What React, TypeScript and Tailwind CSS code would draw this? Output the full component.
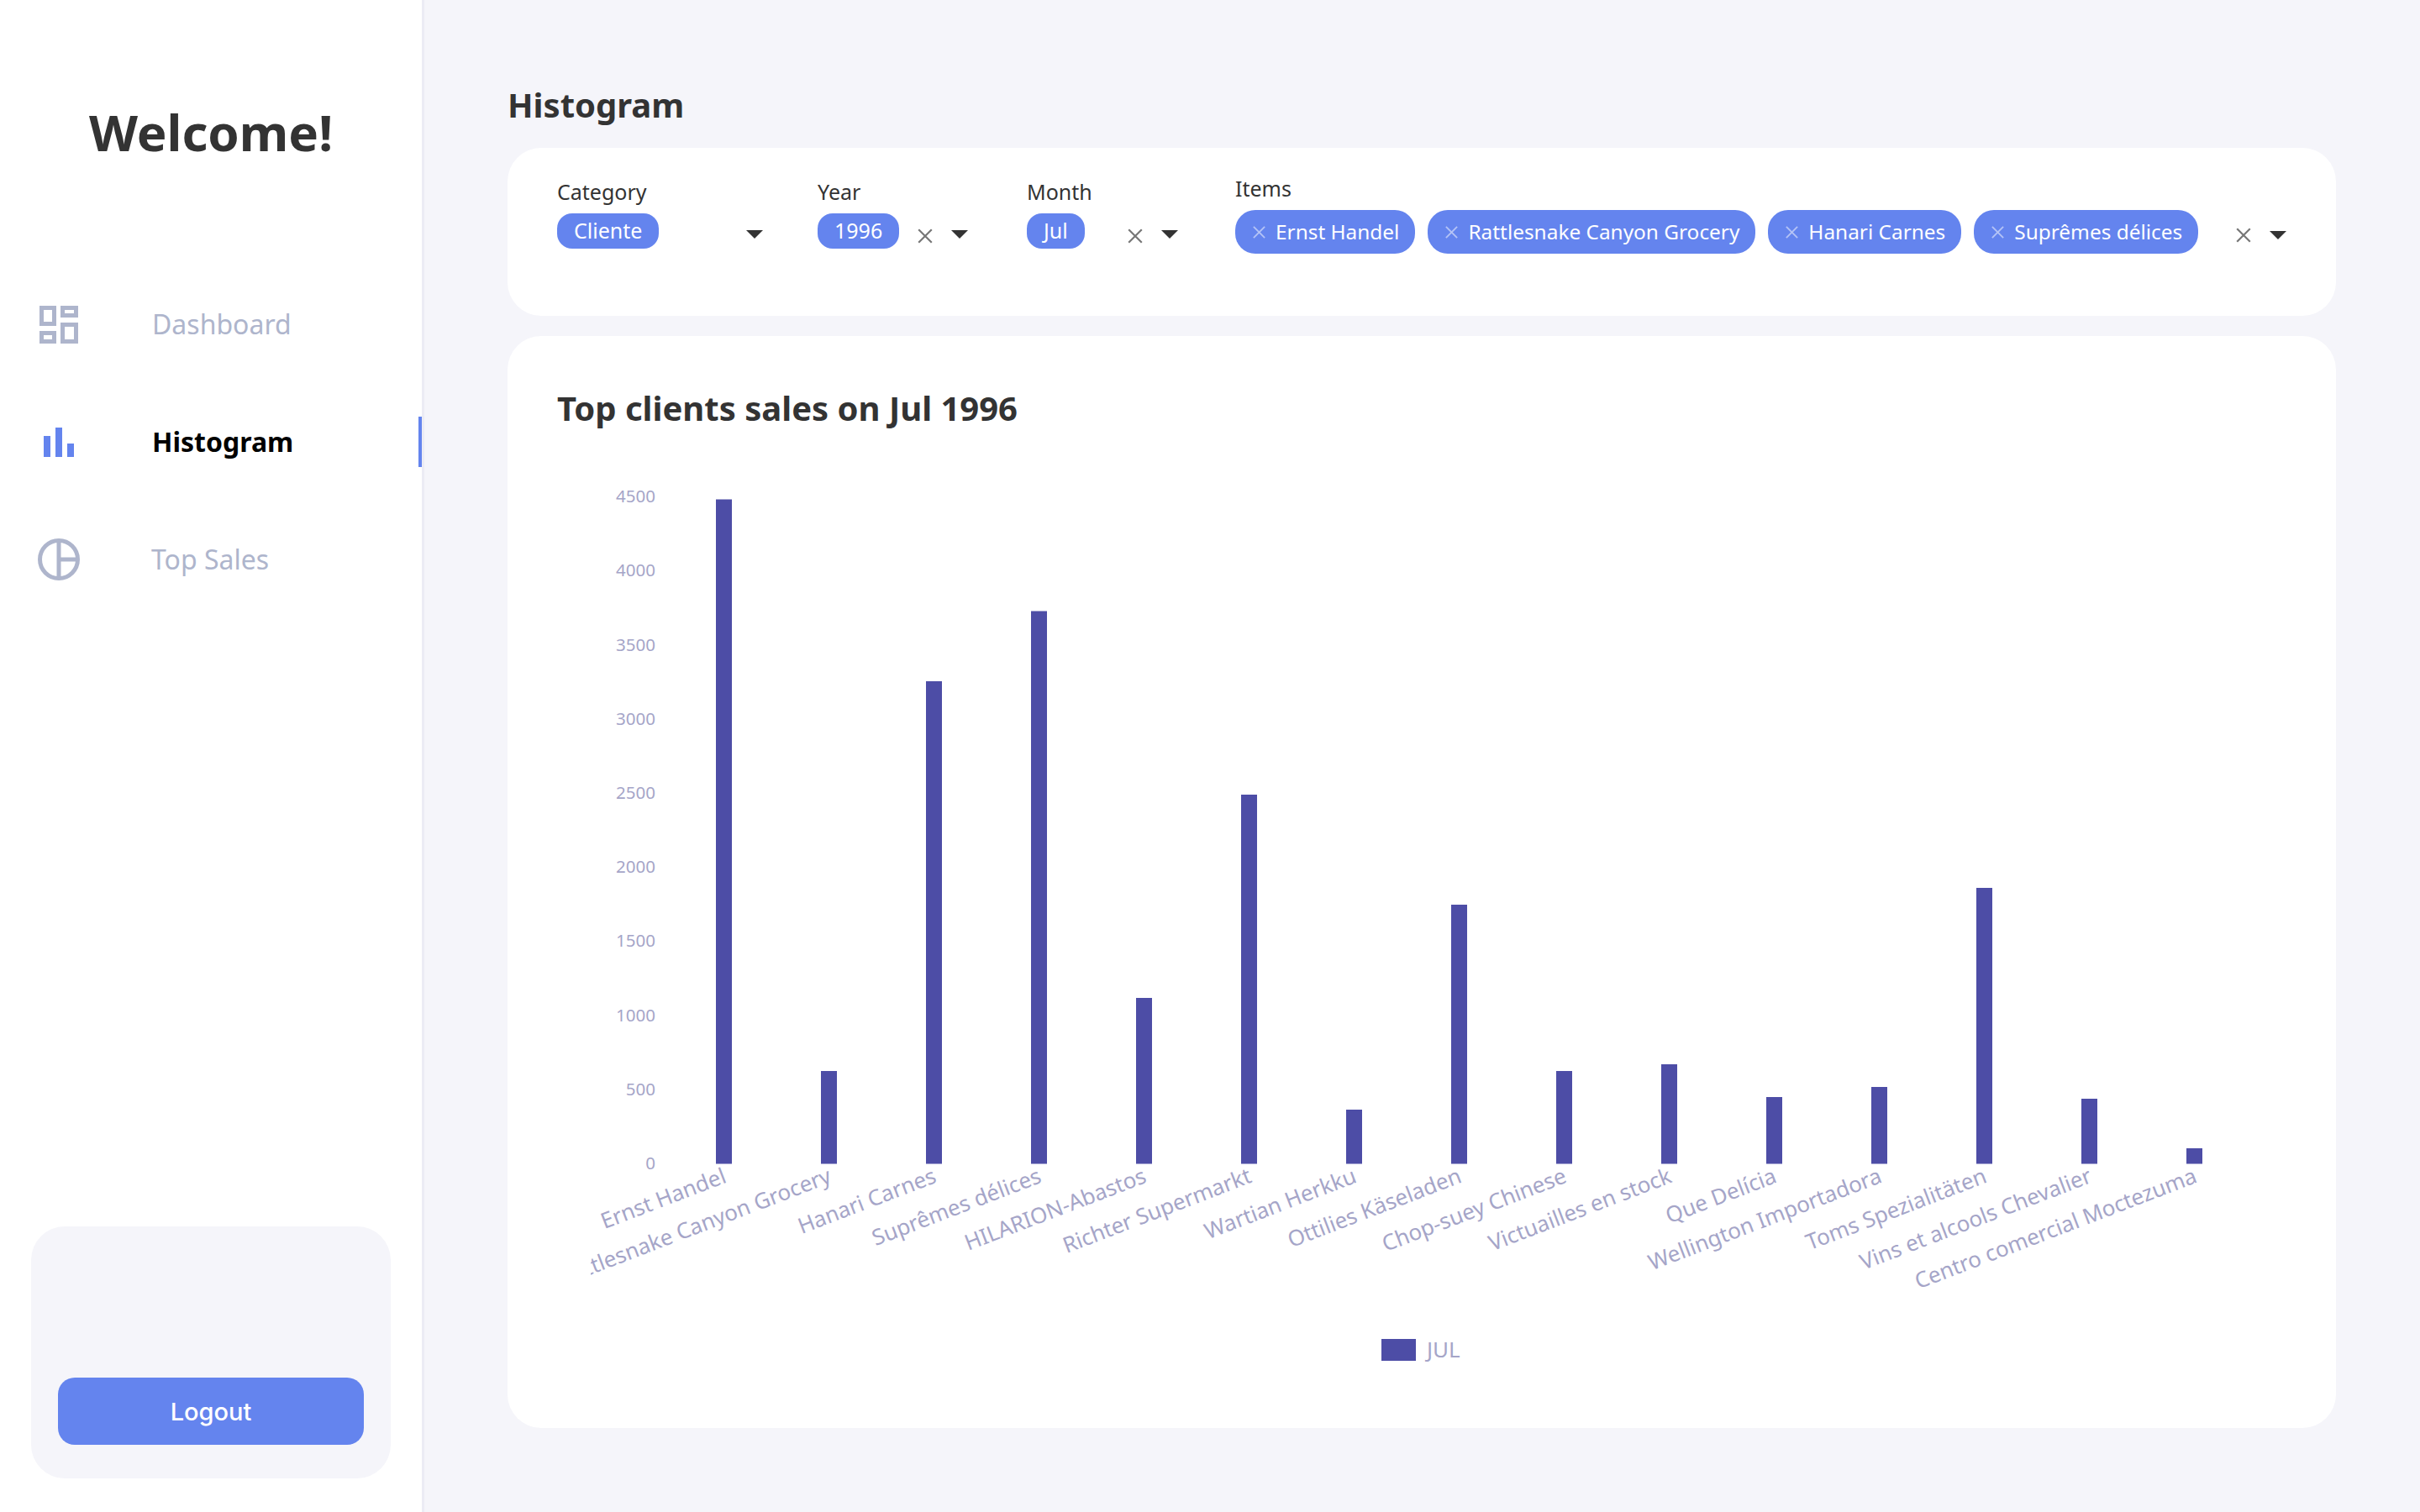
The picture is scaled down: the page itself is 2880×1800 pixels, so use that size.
const clients = [
  { name: 'Ernst Handel', top: 594.5 },
  { name: 'Rattlesnake Canyon Grocery', top: 1275 },
  { name: 'Hanari Carnes', top: 811 },
  { name: 'Suprêmes délices', top: 727.5 },
  { name: 'HILARION-Abastos', top: 1188 },
  { name: 'Richter Supermarkt', top: 946 },
  { name: 'Wartian Herkku', top: 1321 },
  { name: 'Ottilies Käseladen', top: 1077 },
  { name: 'Chop-suey Chinese', top: 1275 },
  { name: 'Victuailles en stock', top: 1267 },
  { name: 'Que Delícia', top: 1306 },
  { name: 'Wellington Importadora', top: 1294 },
  { name: 'Toms Spezialitäten', top: 1057 },
  { name: 'Vins et alcools Chevalier', top: 1308 },
  { name: 'Centro comercial Moctezuma', top: 1367 },
];

const ticks = [0, 500, 1000, 1500, 2000, 2500, 3000, 3500, 4000, 4500];

function Cross({ className }: { className: string }) {
  return (
    <svg viewBox="0 0 18 18" className={className} fill="none" stroke="currentColor" strokeWidth="2">
      <path d="M2 2L16 16M16 2L2 16" />
    </svg>
  );
}

function Arrow() {
  return (
    <svg viewBox="0 0 20 10" className="h-[10px] w-[20px] shrink-0 fill-[#333333]">
      <path d="M0 0H20L10 10Z" />
    </svg>
  );
}

function Chip({ label }: { label: string }) {
  return (
    <span className="flex h-[42px] items-center rounded-[18px] bg-[#6484ee] px-[20px] text-[25px] text-white">
      {label}
    </span>
  );
}

function ItemChip({ label }: { label: string }) {
  return (
    <span className="flex h-[52px] items-center rounded-[24px] bg-[#6484ee] pl-[20px] pr-[19px] text-[24.4px] text-white">
      <Cross className="mr-[11px] h-[17px] w-[17px] text-[#b4c3f6]" />
      {label}
    </span>
  );
}

function DashboardIcon() {
  return (
    <svg viewBox="0 0 46 45" className="h-[45px] w-[46px]" fill="none" stroke="#aeb5cc" strokeWidth="5">
      <rect x="2.5" y="2.5" width="15" height="19" />
      <rect x="27.5" y="2.5" width="16" height="9" />
      <rect x="2.5" y="32.5" width="15" height="10" />
      <rect x="27.5" y="22.5" width="16" height="20" />
    </svg>
  );
}

function BarsIcon() {
  return (
    <svg viewBox="0 0 36 35" className="h-[35px] w-[36px] fill-[#6484ee]">
      <rect x="0" y="10" width="8" height="25" />
      <rect x="14" y="0" width="8" height="35" />
      <rect x="28" y="19" width="8" height="16" />
    </svg>
  );
}

function PieIcon() {
  return (
    <svg viewBox="0 0 50 50" className="h-[50px] w-[50px]" fill="none" stroke="#aeb5cc" strokeWidth="5">
      <circle cx="25" cy="25" r="22.5" />
      <path d="M25 3V47M25 25H47" />
    </svg>
  );
}

function Chart() {
  return (
    <svg viewBox="604 540 2176 1160" className="mt-auto block h-[1160px] w-[2176px]">
      <defs>
        <clipPath id="plot">
          <rect x="703" y="540" width="2077" height="1160" />
        </clipPath>
      </defs>
      {ticks.map((t, i) => (
        <text key={t} x="780" y={1392 - i * 88.2} textAnchor="end" fontSize="20.5" fill="#a5a5c8">
          {t}
        </text>
      ))}
      {clients.map((c, i) => (
        <rect key={c.name} x={852 + i * 125} y={c.top} width="19" height={1385.5 - c.top} fill="#4d4da6" />
      ))}
      <g clipPath="url(#plot)">
        {clients.map((c, i) => (
          <text
            key={c.name}
            transform={`translate(${866 + i * 125} 1407) rotate(-21)`}
            textAnchor="end"
            fontSize="26"
            fill="#a5a5c8"
          >
            {c.name}
          </text>
        ))}
      </g>
      <rect x="1644" y="1594" width="41" height="26" fill="#4d4da6" />
      <text x="1698" y="1616" fontSize="26" fill="#a5a5c8">JUL</text>
    </svg>
  );
}

export default function App() {
  return (
    <div className="flex h-[1800px] w-[2880px] overflow-hidden bg-[#f5f5fa] font-['Noto_Sans',sans-serif] text-[#333333]">
      <aside className="flex w-[505px] shrink-0 flex-col border-r-[3px] border-[#ececf4] bg-white">
        <h1 className="mt-[118px] text-center text-[60px] leading-[78px] font-bold">Welcome!</h1>
        <nav className="mt-[160px] flex flex-col">
          <a className="flex h-[60px] items-center text-[32px] text-[#aeb5cc]">
            <span className="ml-[47px] flex w-[134px]"><DashboardIcon /></span>
            Dashboard
          </a>
          <a className="mt-[80px] flex h-[60px] items-center border-r-4 border-[#6484ee] text-[32px] font-bold text-black">
            <span className="ml-[52px] flex w-[129px]"><BarsIcon /></span>
            Histogram
          </a>
          <a className="mt-[80px] flex h-[60px] items-center text-[32px] text-[#aeb5cc]">
            <span className="ml-[45px] flex w-[135px]"><PieIcon /></span>
            Top Sales
          </a>
        </nav>
        <div className="mx-[37px] mt-auto mb-[40px] flex h-[300px] flex-col justify-end rounded-[40px] bg-[#f5f5fa] px-[32px] pb-[40px]">
          <button className="h-[80px] rounded-[20px] bg-[#6484ee] pt-[2px] font-['Inter',sans-serif] text-[29px] font-medium text-white">
            Logout
          </button>
        </div>
      </aside>
      <main className="flex flex-1 flex-col pt-[97px] pr-[100px] pb-[100px] pl-[99px]">
        <h2 className="text-[40px] leading-[56px] font-bold">Histogram</h2>
        <section className="mt-[23px] flex h-[200px] shrink-0 items-start rounded-[40px] bg-white pt-[38px] pl-[59px] text-[25px]">
          <div className="flex w-[310px] flex-col">
            <span className="h-[40px] leading-[28px]">Category</span>
            <div className="flex items-center">
              <Chip label="Cliente" />
              <span className="ml-[104px] mt-[8px]"><Arrow /></span>
            </div>
          </div>
          <div className="flex w-[249px] flex-col">
            <span className="h-[40px] leading-[28px]">Year</span>
            <div className="flex items-center">
              <Chip label="1996" />
              <Cross className="ml-[21px] mt-[12px] h-[20px] w-[20px] text-[#777777]" />
              <span className="ml-[21px] mt-[8px]"><Arrow /></span>
            </div>
          </div>
          <div className="flex w-[248px] flex-col">
            <span className="h-[40px] leading-[28px]">Month</span>
            <div className="flex items-center">
              <Chip label="Jul" />
              <Cross className="ml-[50px] mt-[12px] h-[20px] w-[20px] text-[#777777]" />
              <span className="ml-[21px] mt-[8px]"><Arrow /></span>
            </div>
          </div>
          <div className="-mt-[4px] flex flex-col">
            <span className="h-[40px] leading-[28px]">Items</span>
            <div className="flex items-center">
              <div className="flex gap-[15px]">
                <ItemChip label="Ernst Handel" />
                <ItemChip label="Rattlesnake Canyon Grocery" />
                <ItemChip label="Hanari Carnes" />
                <ItemChip label="Suprêmes délices" />
              </div>
              <Cross className="ml-[44px] mt-[8px] h-[20px] w-[20px] text-[#777777]" />
              <span className="ml-[21px] mt-[8px]"><Arrow /></span>
            </div>
          </div>
        </section>
        <section className="mt-[24px] flex flex-1 flex-col rounded-[40px] bg-white">
          <h3 className="mt-[56px] ml-[59px] text-[40px] leading-[60px] font-bold">Top clients sales on Jul 1996</h3>
          <Chart />
        </section>
      </main>
    </div>
  );
}
